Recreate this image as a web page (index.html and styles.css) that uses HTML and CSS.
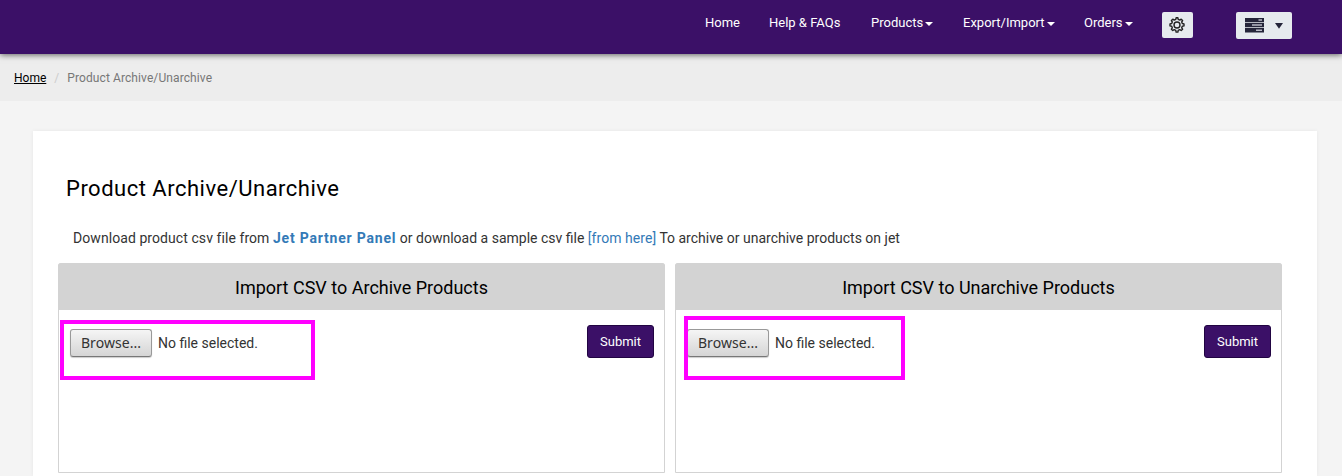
FILE: index.html
```html
<!DOCTYPE html>
<html lang="en">
<head>
<meta charset="utf-8">
<title>Product Archive/Unarchive</title>
<link rel="stylesheet" href="styles.css">
</head>
<body>
<header class="navbar">
  <nav class="nav">
    <a class="nav-item w-home"><span>Home</span></a>
    <a class="nav-item w-help"><span>Help &amp; FAQs</span></a>
    <a class="nav-item w-products"><span>Products</span><i class="caret"></i></a>
    <a class="nav-item w-export"><span>Export/Import</span><i class="caret"></i></a>
    <a class="nav-item w-orders"><span>Orders</span><i class="caret"></i></a>
  </nav>
  <button class="icon-btn gear-btn" aria-label="Settings">
    <svg width="16" height="16" viewBox="0 0 16 16" fill="none" stroke="#222" stroke-width="1.4" stroke-linejoin="round"><path d="M6.8 2.4 7.1.8h1.8l.3 1.6 1.6.7 1.4-.9 1.4 1.4-.9 1.4.6 1.5 1.7.4v2l-1.7.3-.6 1.6.9 1.4-1.4 1.3-1.4-.9-1.6.7-.3 1.8H7.1l-.3-1.8-1.6-.7-1.4.9-1.4-1.3.9-1.4-.6-1.6L1 8.900v-2l1.700-.4.6-1.500-.9-1.400 1.400-1.400 1.400.9z"/><circle cx="8" cy="8" r="3"/></svg>
  </button>
  <button class="icon-btn menu-btn" aria-label="Account menu">
    <svg width="19" height="15" viewBox="0 0 19 15"><path fill="#25253a" d="M0 0h19v4H0zM0 4.800h19v4.400H0zM0 10h19v4.500H0z"/><path fill="#b9bac6" d="M13.500 1.200H17v1.500h-3.500zM7 6.200h10v1.600H7zM11 11.500h6V13h-6z"/></svg>
    <svg width="8" height="6" viewBox="0 0 8 6"><path fill="#25253a" d="M0 0h8L4 5.800z"/></svg>
  </button>
</header>
<div class="breadcrumb"><a class="crumb-home">Home</a><span class="crumb-sep">/</span><span class="crumb-current">Product Archive/Unarchive</span></div>
<main class="card">
  <h1 class="title">Product Archive/Unarchive</h1>
  <p class="intro"><span class="intro-lead">Download product csv file from</span> <a class="partner">Jet Partner Panel</a> <span>or download a sample csv file</span> <a class="link">[from here]</a> <span>To archive or unarchive products on jet</span></p>
  <div class="panels">
    <section class="panel">
      <h2 class="panel-head">Import CSV to Archive Products</h2>
      <div class="panel-body">
        <div class="file"><button class="browse">Browse...</button><span>No file selected.</span></div>
        <button class="submit">Submit</button>
      </div>
    </section>
    <section class="panel">
      <h2 class="panel-head">Import CSV to Unarchive Products</h2>
      <div class="panel-body">
        <div class="file"><button class="browse">Browse...</button><span>No file selected.</span></div>
        <button class="submit">Submit</button>
      </div>
    </section>
  </div>
</main>
<div class="highlight highlight-archive"></div>
<div class="highlight highlight-unarchive"></div>
</body>
</html>
```
FILE: styles.css
```css
* { box-sizing: border-box; }
body { margin: 0; background: #f4f4f4; font-family: Roboto, sans-serif; color: #333; font-size: 14px; position: relative; }
button { font-family: inherit; margin: 0; padding: 0; }
.navbar { position: relative; height: 54px; background: #3b1067; box-shadow: 0 1px 6px rgba(0,0,0,.6); display: flex; align-items: flex-start; padding-left: 705px; }
.nav { display: flex; padding-top: 12px; }
.nav-item { display: flex; align-items: center; height: 20px; color: #fff; font-size: 13px; white-space: nowrap; }
.w-home { width: 64px; }
.w-help { width: 102px; }
.w-products { width: 92px; }
.w-export { width: 121px; }
.w-orders { width: 78px; }
.caret { width: 0; height: 0; border: 4px solid transparent; border-top-color: #fff; border-bottom: 0; margin: 3px 0 0 2px; }
.icon-btn { border: 0; border-radius: 2px; background: #e6eaee; display: flex; align-items: center; justify-content: center; }
.gear-btn { width: 31px; height: 26px; margin-top: 12px; padding-right: 1px; }
.menu-btn { width: 56px; height: 27px; margin: 12px 0 0 43px; gap: 11px; }
.breadcrumb { height: 47px; background: #ededed; padding: 16px 14px 0; font-size: 12px; line-height: 16px; color: #777; display: flex; }
.crumb-home { color: #000; text-decoration: underline; }
.crumb-sep { color: #ccc; padding: 0 8px; }
.crumb-current { letter-spacing: .1px; }
.card { margin: 30px 25px 0 33px; height: 345px; background: #fff; padding: 43px 35px 0 25px; box-shadow: 0 0 4px rgba(0,0,0,.06); }
.title { margin: 0; padding-left: 8px; font-size: 22px; font-weight: 400; line-height: 30px; letter-spacing: .5px; color: #000; }
.intro { margin: 24px 0 0; padding-left: 15px; line-height: 20px; white-space: nowrap; }
.intro-lead { letter-spacing: .07px; }
.partner { color: #337ab7; font-weight: 700; letter-spacing: .8px; }
.link { color: #337ab7; letter-spacing: .05px; }
.panels { display: flex; gap: 10px; margin-top: 15px; }
.panel { flex: 1; height: 210px; border: 1px solid #d3d3d3; border-radius: 3px 3px 0 0; }
.panel-head { margin: -1px -1px 0; height: 47px; background: #d3d3d3; border-radius: 3px 3px 0 0; text-align: center; font-size: 18px; font-weight: 400; line-height: 49px; color: #000; }
.panel-body { display: flex; justify-content: space-between; align-items: flex-start; padding: 15px 10px 0 11px; }
.file { display: flex; align-items: center; gap: 6px; margin-top: 4px; }
.browse { width: 82px; height: 28px; border: 1px solid #999; border-bottom-color: #777; border-radius: 3px; background: linear-gradient(#f5f5f5, #d5d5d5); box-shadow: 0 1px 1px rgba(0,0,0,.2); font-family: "Noto Sans", sans-serif; font-size: 14px; color: #333; padding-bottom: 2px; letter-spacing: .05px; }
.submit { width: 67px; height: 33px; border: 1px solid #210442; border-radius: 3px; background: #3b1067; color: #fff; font-size: 13px; }
.highlight { position: absolute; border: 4px solid #f0f; }
.highlight-archive { left: 60px; top: 320px; width: 255px; height: 60px; }
.highlight-unarchive { left: 684px; top: 316px; width: 221px; height: 64px; }
```
